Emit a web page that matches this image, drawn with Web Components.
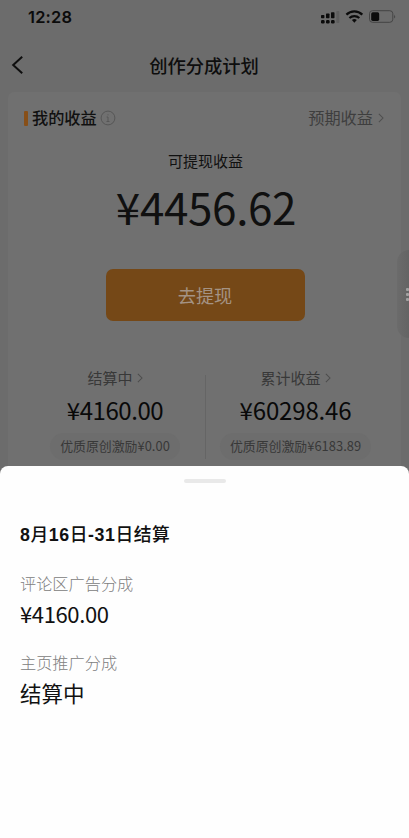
<!DOCTYPE html>
<html lang="zh-CN"><head><meta charset="utf-8"><title>创作分成计划</title>
<style>
html,body{margin:0;width:409px;height:838px;overflow:hidden;background:#6d6d6d}
</style></head><body>
<income-app></income-app>
<script>
const define=(name,html)=>customElements.define(name,class extends HTMLElement{
  constructor(){super();const t=document.createElement('template');t.innerHTML=html;
    this.attachShadow({mode:'open'}).append(t.content.cloneNode(true));}
});
define('chevron-icon',`<style>:host{display:block;width:6px;height:10px}svg{display:block;width:100%;height:100%}</style>
<svg viewBox="0 0 7 11" fill="none" stroke="currentColor" stroke-width="1.2"><path d="M1 .8 5.8 5.5 1 10.2"/></svg>`);
define('status-bar',`<style>
:host{display:flex;justify-content:space-between;height:34px;padding:0 12px 0 28px;color:#0b0b0b;box-sizing:border-box}
.time{font:600 16.4px/34px Inter,"Liberation Sans",sans-serif;letter-spacing:.2px}
svg{display:block;margin-top:9px}</style>
<span class="time">12:28</span>
<svg width="77" height="16" viewBox="320 9 77 16" fill="#0b0b0b">
<rect x="321" y="15" width="3.4" height="3.3" rx=".7"/><rect x="326" y="13.6" width="3.5" height="4.7" rx=".7"/><rect x="331" y="12.2" width="3.5" height="6.1" rx=".7"/>
<rect x="321" y="20" width="3.6" height="3.4" rx="1.2"/><rect x="326" y="20" width="3.6" height="3.4" rx="1.2"/><rect x="331" y="20" width="3.6" height="3.4" rx="1.2"/>
<rect x="336.3" y="11" width="3" height="12" rx=".8" fill="#5e5e5e"/>
<g fill="none" stroke="#0b0b0b" stroke-width="2.2"><path d="M346.4 14.6a11.4 11.4 0 0 1 15.9 0"/><path d="M349.4 18a7.2 7.2 0 0 1 9.9 0"/></g>
<path d="M351.9 20.1a3.8 3.8 0 0 1 4.9 0l-2.45 2.6z"/>
<rect x="369.5" y="10.7" width="23.3" height="11.6" rx="3" fill="none" stroke="#404040" stroke-width=".9"/>
<rect x="371.2" y="12.3" width="8" height="8.6" rx="1.6"/><path d="M394.2 14.5q1.8 2 0 4z" fill="#404040"/></svg>`);
define('nav-bar',`<style>
:host{display:grid;grid-template-columns:40px 1fr 40px;align-items:center;height:58px;box-sizing:border-box;color:#0e0e0e}
svg{display:block;margin-left:11px;margin-top:3px}
span{text-align:center;font:500 18.3px/26px "Noto Sans CJK SC",sans-serif;padding:4px 1px 0 0}</style>
<svg width="13" height="20" fill="none" stroke="currentColor" stroke-width="2"><path d="M11.2 1.7 2.2 10l9 8.3"/></svg><span><slot></slot></span>`);
define('card-head',`<style>
:host{display:flex;align-items:center;height:26px;padding:0 17px 0 16px;font:400 16.2px/26px "Noto Sans CJK SC",sans-serif;color:#3e3e3e}
i{width:4px;height:15px;background:#874f18;border-radius:1px;margin-right:4px}
span,b{position:relative;top:-1px}
b{font-weight:500;font-size:16.2px;color:#101010}
svg{margin-left:3px}.r{margin-left:auto;margin-right:5px}chevron-icon{color:#4e4e4e}</style>
<i></i><b>我的收益</b><svg width="16" height="16" fill="none" stroke="#565656"><circle cx="8" cy="8" r="6.9"/><path d="M8 7v4.5M6.7 7H8M6.5 11.5h3M7.5 4.8h1"/></svg>
<span class="r">预期收益</span><chevron-icon></chevron-icon>`);
define('money-text',`<style>:host{display:block;font-family:"Noto Sans CJK SC",sans-serif;font-weight:400;white-space:nowrap}</style><slot></slot>`);
define('income-stat',`<style>
:host{display:flex;flex-direction:column;align-items:center;font-family:"Noto Sans CJK SC",sans-serif;color:#383838}
.l{display:flex;align-items:center;gap:4px;font-size:15px;line-height:22px;color:#383838}
chevron-icon{height:10px;width:6px;color:#4d4d4d}
money-text{color:#090909;font-size:24px;line-height:32px;margin-top:5px;letter-spacing:var(--ls,-.45px)}
.b{display:flex;justify-content:center;box-sizing:border-box;border-radius:14px;background:#6d6d6d;margin-top:7px;height:27px;padding:0 10px;font-size:12.9px;line-height:26px;white-space:nowrap}
.b money-text{all:unset;font-size:12.9px;letter-spacing:.03px}</style>
<div class="l"><slot name="label"></slot><chevron-icon></chevron-icon></div>
<money-text><slot name="value"></slot></money-text>
<div class="b"><span>优质原创激励</span><money-text><slot name="bonus"></slot></money-text></div>`);
define('income-card',`<style>
:host{display:block;margin:0 8px;height:390px;border-radius:6px;background:#707070;padding-top:13px;box-sizing:border-box;font-family:"Noto Sans CJK SC",sans-serif}
.label{text-align:center;font-size:15px;line-height:24px;margin:18px 0 0 2px;color:#101010}
.total{font-size:44px;line-height:52px;letter-spacing:-.35px;text-align:center;margin:7px 0 0 3px;color:#101010}
button{all:unset;display:block;width:199px;height:52px;margin:37px 0 0 97.5px;border-radius:7px;background:#754817;color:#a49384;text-align:center;font:400 18.2px/53px "Noto Sans CJK SC",sans-serif}
.stats{display:grid;grid-template-columns:197px 1px 1fr;margin-top:46px}
.line{height:84px;margin-top:8px;background:#656565}
.a{padding-left:17px}.z{padding-right:16px;--ls:-.15px}</style>
<card-head></card-head>
<div class="label">可提现收益</div>
<money-text class="total">¥4456.62</money-text>
<button>去提现</button>
<div class="stats">
<income-stat class="a"><span slot="label">结算中</span><span slot="value">¥4160.00</span><span slot="bonus">¥0.00</span></income-stat>
<div class="line"></div>
<income-stat class="z"><span slot="label">累计收益</span><span slot="value">¥60298.46</span><span slot="bonus">¥6183.89</span></income-stat></div>`);
define('settlement-sheet',`<style>
:host{display:block;box-sizing:border-box;height:372px;background:#fefefe;border-radius:8px 8px 0 0;padding:13px 20px 0;font-family:"Noto Sans CJK SC",sans-serif;color:#111}
.handle{width:42px;height:4px;border-radius:2px;background:#e9e9e9;margin:0 auto}
h2{margin:37px 0 0;font:700 17.8px/26px "Liberation Sans","Noto Sans CJK SC",sans-serif;white-space:nowrap;letter-spacing:.56px}
h2 span{font-family:"Noto Sans CJK SC",sans-serif;font-weight:500}
.k{font-size:16.2px;line-height:24px;color:#808080;font-weight:300}
.one{margin-top:23px}.two{margin-top:22px}
money-text{font-size:22px;line-height:30px;margin-top:3px;letter-spacing:-.38px}
.v{font-size:21.5px;line-height:30px;margin-top:4px}</style>
<div class="handle"></div>
<h2>8<span>月</span>16<span>日</span>-31<span>日结算</span></h2>
<div class="k one">评论区广告分成</div><money-text>¥4160.00</money-text>
<div class="k two">主页推广分成</div><div class="v">结算中</div>`);
define('side-handle',`<style>:host{display:flex;flex-direction:column;align-items:flex-end;justify-content:center;gap:2px;width:12px;height:88px;border-radius:12px 0 0 12px;background:linear-gradient(90deg,#6b6b6b,#646464);box-sizing:border-box}
i{width:3px;height:3px;border-radius:1px;background:#a2a2a2}</style><i></i><i></i><i></i>`);
define('income-app',`<style>
:host{display:block;position:relative;width:409px;height:838px;overflow:hidden;background:#6c6c6c}
side-handle{position:absolute;right:0;top:250px}
settlement-sheet{position:absolute;left:0;right:0;bottom:0}</style>
<status-bar></status-bar><nav-bar>创作分成计划</nav-bar><income-card></income-card><side-handle></side-handle><settlement-sheet></settlement-sheet>`);
</script></body></html>
